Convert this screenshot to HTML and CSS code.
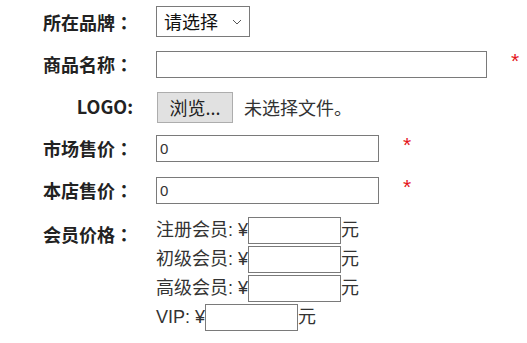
FILE: index.html
```html
<!DOCTYPE html>
<html>
<head>
    <meta charset="utf-8">
    <link rel="stylesheet" href="styles.css">
</head>
<body>
    <form class="goods-form" onsubmit="return false;">
        <div class="row">
            <label class="label">所在品牌<span class="colon">：</span></label>
            <div class="field">
                <div class="select-box">
                    <span>请选择</span>
                    <svg class="chevron" width="10" height="6" viewBox="0 0 10 6"><path d="M1 1 L5 5 L9 1" fill="none" stroke="#555" stroke-width="1"/></svg>
                </div>
            </div>
        </div>

        <div class="row">
            <label class="label">商品名称<span class="colon">：</span></label>
            <div class="field">
                <input type="text" class="text-input wide">
                <span class="required">*</span>
            </div>
        </div>

        <div class="row">
            <label class="label">LOGO:</label>
            <div class="field">
                <span class="file-btn">浏览...</span>
                <span class="file-name">未选择文件。</span>
            </div>
        </div>

        <div class="row">
            <label class="label">市场售价<span class="colon">：</span></label>
            <div class="field">
                <input type="text" class="text-input price" value="0">
                <span class="required">*</span>
            </div>
        </div>

        <div class="row">
            <label class="label">本店售价<span class="colon">：</span></label>
            <div class="field">
                <input type="text" class="text-input price" value="0">
                <span class="required">*</span>
            </div>
        </div>

        <div class="row member-row">
            <label class="label member-label">会员价格<span class="colon">：</span></label>
            <div class="member-list">
                <div class="member-line">注册会员: ¥<input type="text" class="member-input">元</div>
                <div class="member-line">初级会员: ¥<input type="text" class="member-input">元</div>
                <div class="member-line">高级会员: ¥<input type="text" class="member-input">元</div>
                <div class="member-line">VIP: ¥<input type="text" class="member-input">元</div>
            </div>
        </div>
    </form>
</body>
</html>
```
FILE: styles.css
```css
body {
    margin: 0;
    background: #fff;
    color: #333;
    font-family: "Liberation Sans", "Noto Sans CJK SC", sans-serif;
    font-size: 18px;
}

.goods-form {
    padding-top: 1px;
}

.row {
    display: flex;
    align-items: center;
    height: 42px;
}

.label {
    width: 133px;
    text-align: right;
    font-family: "Noto Sans CJK SC", sans-serif;
    font-weight: bold;
    color: #222;
    line-height: 20px;
    margin-right: 23px;
}

/* centred full-width colon, as in the original */
.colon {
    font-family: "Noto Sans CJK TC", sans-serif;
}

.field {
    display: flex;
    align-items: center;
}

.select-box {
    display: flex;
    align-items: center;
    justify-content: space-between;
    box-sizing: border-box;
    width: 94px;
    height: 31px;
    margin-top: -2px;
    padding: 0 7px 0 7px;
    border: 1px solid #7a7a7a;
    font-family: "Noto Sans CJK SC", sans-serif;
    color: #111;
    line-height: 20px;
}

.chevron {
    margin-top: 1px;
}

.text-input {
    box-sizing: border-box;
    height: 27px;
    padding: 0 3px;
    border: 1px solid #7a7a7a;
    font-family: "Liberation Sans", sans-serif;
    font-size: 15px;
    color: #333;
    outline: none;
}

.wide {
    width: 331px;
}

.price {
    width: 223px;
}

.required {
    color: #e4141b;
    font-size: 21px;
    line-height: 20px;
    margin-left: 24px;
    margin-top: -7px;
}

.file-btn {
    box-sizing: border-box;
    width: 76px;
    height: 31px;
    margin-left: 1px;
    margin-top: 2px;
    background: #e1e1e1;
    border: 1px solid #adadad;
    text-align: center;
    font-family: "Noto Sans CJK SC", sans-serif;
    line-height: 29px;
    color: #222;
}

.file-name {
    margin-left: 11px;
    margin-top: 2px;
    font-family: "Noto Sans CJK SC", sans-serif;
    color: #333;
}

.member-row {
    align-items: flex-start;
    height: auto;
}

.member-label {
    padding-top: 13px;
}

.member-list {
    display: flex;
    flex-direction: column;
    gap: 2px;
    padding-top: 6px;
}

.member-line {
    display: flex;
    align-items: center;
    height: 27px;
    line-height: 27px;
    white-space: pre;
}

.member-input {
    box-sizing: border-box;
    width: 93px;
    height: 27px;
    padding: 0 3px;
    border: 1px solid #7a7a7a;
    outline: none;
}
```
